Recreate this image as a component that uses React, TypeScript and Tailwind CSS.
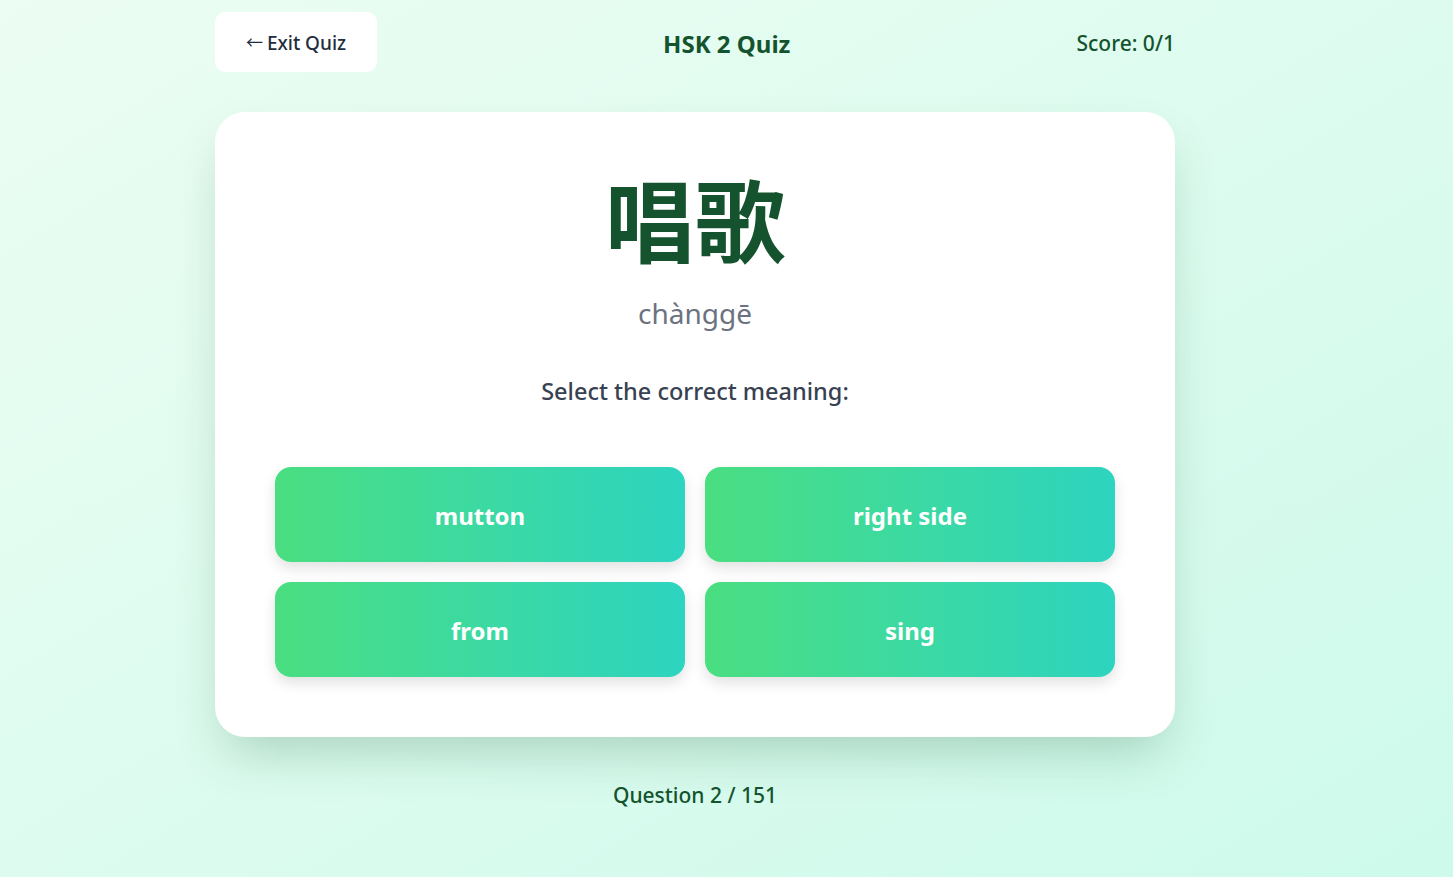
import React from 'react';

const options = ['mutton', 'right side', 'from', 'sing'];

export default function App() {
  return (
    <div
      className="min-h-screen w-full bg-gradient-to-br from-[#ecfdf3] to-[#cdfaeb] pt-3"
      style={{ fontFamily: '"Noto Sans", "Noto Sans CJK SC", sans-serif' }}
    >
      <div className="ml-[215px] w-[960px]">
        {/* Header */}
        <div className="flex items-center justify-between">
          <button className="flex h-[60px] w-[162px] items-center justify-center gap-1 rounded-[10px] bg-white pt-0.5 text-[19px] font-medium text-[#1f2d3d]">
            <span className="text-[17px] font-normal">←</span> Exit Quiz
          </button>
          <h1 className="pt-1 text-[24px] font-bold text-[#14532d]">HSK 2 Quiz</h1>
          <div className="pt-1 text-[21px] font-medium text-[#14532d]">Score: 0/1</div>
        </div>

        {/* Card */}
        <div className="mt-10 rounded-[30px] bg-white p-[60px] shadow-[0_25px_50px_-12px_rgba(20,83,45,0.25)]">
          <div className="flex flex-col items-center">
            <div
              className="text-[90px] font-bold leading-none text-[#14532d]"
              style={{ fontFamily: '"Noto Sans CJK SC", sans-serif' }}
            >
              唱歌
            </div>
            <div className="mt-[33px] text-[28px] leading-[36px] text-[#6b7280]">chànggē</div>
            <div className="mt-[44px] text-[23.5px] leading-[32px] font-medium text-[#374151]">
              Select the correct meaning:
            </div>
          </div>

          <div className="mt-[60px] grid grid-cols-2 gap-5">
            {options.map((o) => (
              <button
                key={o}
                className="flex h-[95px] items-center justify-center rounded-2xl bg-gradient-to-r from-[#4ade80] to-[#2dd4bf] pt-0.5 text-[24px] font-bold text-white shadow-[0_6px_14px_rgba(0,0,0,0.12)]"
              >
                {o}
              </button>
            ))}
          </div>
        </div>

        {/* Footer */}
        <div className="mt-[44px] text-center text-[21px] leading-[28px] font-medium text-[#14532d]">
          Question 2 / 151
        </div>
      </div>
    </div>
  );
}
